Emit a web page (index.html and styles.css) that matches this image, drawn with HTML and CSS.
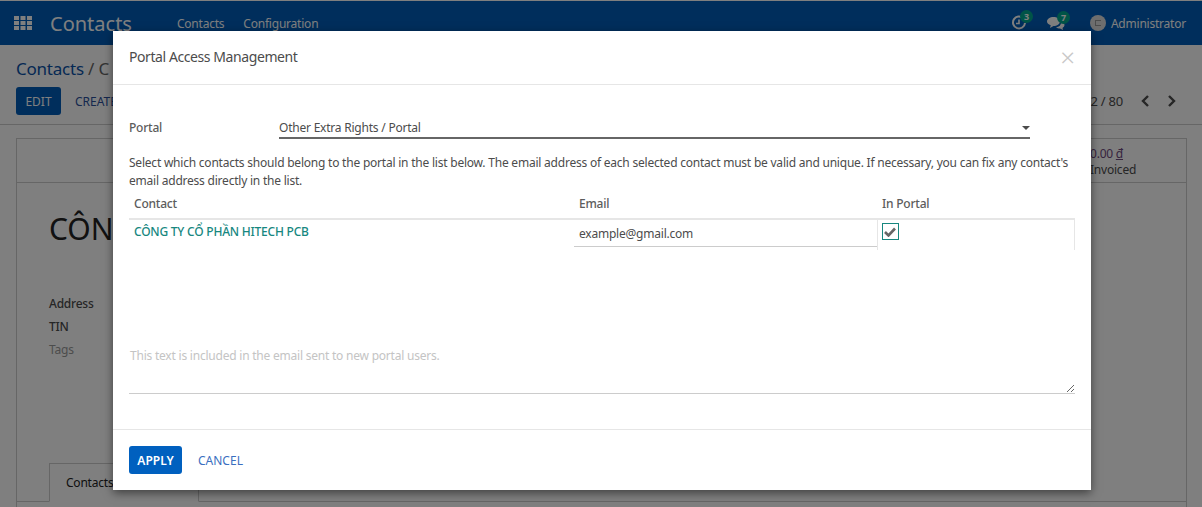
FILE: index.html
```html
<!DOCTYPE html>
<html lang="en">
<head>
    <meta charset="UTF-8">
    <meta name="viewport" content="width=device-width, initial-scale=1.0">
    <title>Portal Access Management</title>
    <link rel="stylesheet" href="styles.css">
</head>
<body>
    <header class="navbar">
        <svg class="apps-icon" width="18" height="14" viewBox="0 0 18 14">
            <path d="M0 0h5v4H0zM6.500 0h5v4h-5zM13 0h5v4h-5zM0 5h5v4H0zM6.500 5h5v4h-5zM13 5h5v4h-5zM0 10h5v4H0zM6.500 10h5v4h-5zM13 10h5v4h-5z" fill="currentColor"/>
        </svg>
        <span class="brand">Contacts</span>
        <nav class="menu">
            <a>Contacts</a>
            <a>Configuration</a>
        </nav>
        <div class="systray">
            <span class="tray-item">
                <svg width="16" height="16" viewBox="0 0 16 16" fill="none" stroke="currentColor">
                    <path d="M12.500 3.500A6 6 0 1 0 14 8" stroke-width="2"/>
                    <path d="M8 4.500V8.500H5" stroke-width="1.600"/>
                </svg>
                <span class="badge badge-clock">3</span>
            </span>
            <span class="tray-item tray-chat">
                <svg width="18" height="15" viewBox="0 0 18 15" fill="currentColor">
                    <path d="M6.500 1C10 1 13 3 13 5.500S10 10 6.500 10L3 12l.7-2.700C1.500 8.500 0 7.200 0 5.500 0 3 3 1 6.500 1z"/>
                    <path d="M14 5.500c2 .6 3.500 2 3.500 3.500 0 1.200-.8 2.200-2 2.900l.5 2.100-3-1.500c-1.500 0-3-.5-4-1.300 3 0 5.500-2.200 5-5.700z"/>
                </svg>
                <span class="badge badge-chat">7</span>
            </span>
            <span class="user">
                <span class="avatar"><span class="avatar-mark"></span></span>
                Administrator
            </span>
        </div>
    </header>

    <section class="control-panel">
        <div class="breadcrumb">Contacts <span class="crumb-sep">/</span> <span class="crumb-current">C</span></div>
        <div class="cp-buttons">
            <div class="cp-left">
                <button class="btn-edit">EDIT</button>
                <button class="btn-link">CREATE</button>
            </div>
            <div class="pager">
                <span>22 / 80</span>
                <svg width="10" height="12" viewBox="0 0 10 12" fill="none" stroke="currentColor" stroke-width="2.400"><path d="M8 1L3 6l5 5"/></svg>
                <svg width="10" height="12" viewBox="0 0 10 12" fill="none" stroke="currentColor" stroke-width="2.400"><path d="M2 1l5 5-5 5"/></svg>
            </div>
        </div>
    </section>

    <main class="sheet">
        <div class="stat-row">
            <div class="stat-box">
                <div class="stat-value">0.00 <u>đ</u></div>
                <div>Invoiced</div>
            </div>
        </div>
        <h1 class="partner-name">CÔNG</h1>
        <div class="partner-field field-strong">Address</div>
        <div class="partner-field field-strong">TIN</div>
        <div class="partner-field field-muted">Tags</div>
        <div class="tabs"><span class="tab">Contacts</span></div>
    </main>

    <div class="backdrop"></div>

    <div class="modal">
        <div class="modal-header">
            <span class="modal-title">Portal Access Management</span>
            <span class="modal-close">×</span>
        </div>
        <div class="modal-body">
            <div class="portal-row">
                <label class="portal-label">Portal</label>
                <div class="portal-select">
                    Other Extra Rights / Portal
                    <span class="caret"></span>
                </div>
            </div>
            <p class="help-text">Select which contacts should belong to the portal in the list below. The email address of each selected contact must be valid and unique. If necessary, you can fix any contact's email address directly in the list.</p>
            <table class="portal-table">
                <thead>
                    <tr>
                        <th class="col-contact">Contact</th>
                        <th class="col-email">Email</th>
                        <th class="col-check">In Portal</th>
                    </tr>
                </thead>
                <tbody>
                    <tr>
                        <td class="contact-name">CÔNG TY CỔ PHẦN HITECH PCB</td>
                        <td class="email-cell"><input type="text" value="example@gmail.com"></td>
                        <td class="check-cell">
                            <span class="checkbox">
                                <svg width="12" height="10" viewBox="0 0 12 10"><path d="M1 5l3.500 3.500L11 1.500" fill="none" stroke="currentColor" stroke-width="2.600"/></svg>
                            </span>
                        </td>
                    </tr>
                </tbody>
            </table>
            <textarea class="welcome-text" placeholder="This text is included in the email sent to new portal users."></textarea>
        </div>
        <div class="modal-footer">
            <button class="btn-apply">APPLY</button>
            <button class="btn-cancel">CANCEL</button>
        </div>
    </div>
</body>
</html>
```

FILE: styles.css
```css
html, body {
    height: 100%;
}

body {
    font-family: "Noto Sans", "Open Sans", Arial, sans-serif;
    font-size: 12px;
    letter-spacing: -0.22px;
    background-color: #fff;
    color: #4c4c4c;
    margin: 0;
    overflow: hidden;
}

.navbar {
    display: flex;
    align-items: center;
    height: 44px;
    margin-top: 1px;
    background-color: #005cb8;
    color: #fff;
    box-sizing: border-box;
}

.apps-icon {
    margin-left: 14px;
}

.brand {
    font-size: 20px;
    letter-spacing: 0;
    margin-left: 18px;
}

.menu {
    display: flex;
    gap: 19px;
    margin-left: 45px;
}

.systray {
    display: flex;
    align-items: center;
    margin-left: auto;
    margin-right: 16px;
}

.tray-item {
    display: flex;
    position: relative;
    margin-right: 20px;
}

.tray-chat {
    margin-right: 25px;
}

.badge {
    position: absolute;
    left: 9px;
    top: -5px;
    width: 13px;
    height: 13px;
    border-radius: 50%;
    background-color: #00a98f;
    font-size: 9px;
    font-weight: bold;
    line-height: 13px;
    text-align: center;
}

.badge-chat {
    left: 10px;
}

.user {
    display: flex;
    align-items: center;
    gap: 5px;
}

.avatar {
    display: flex;
    align-items: center;
    justify-content: center;
    width: 16px;
    height: 16px;
    border-radius: 50%;
    background-color: #ddd;
}

.avatar-mark {
    width: 5px;
    height: 4px;
    border: 1px solid #999;
    border-right-width: 0;
}

.control-panel {
    height: 80px;
    padding: 12px 16px 0;
    box-sizing: border-box;
    background-color: #fff;
    border-bottom: 1px solid #ccc;
}

.breadcrumb {
    font-size: 17px;
    color: #0a52a8;
    line-height: 24px;
}

.crumb-sep, .crumb-current {
    color: #666;
}

.cp-buttons {
    display: flex;
    justify-content: space-between;
    margin-top: 6px;
}

.cp-left {
    display: flex;
    gap: 14px;
}

.btn-edit {
    width: 45px;
    height: 28px;
    border: none;
    border-radius: 3px;
    background-color: #005cb8;
    color: #fff;
    font: inherit;
    padding: 0;
}

.btn-link {
    border: none;
    background: none;
    padding: 0;
    color: #2a4f9c;
    font: inherit;
}

.pager {
    display: flex;
    align-items: center;
    gap: 17px;
    padding-right: 9px;
    font-size: 13px;
}

.sheet {
    margin: 13px 15px 0 16px;
    height: 400px;
    border: 1px solid #ccc;
    overflow: hidden;
}

.stat-row {
    display: flex;
    justify-content: flex-end;
    height: 43px;
    border-bottom: 1px solid #ccc;
}

.stat-box {
    width: 96px;
    padding-top: 7px;
    line-height: 16px;
    border-left: 1px solid #ccc;
}

.stat-value {
    color: #6f4a7e;
}

.partner-name {
    width: 64px;
    overflow: hidden;
    font-size: 30px;
    font-weight: normal;
    letter-spacing: 0;
    color: #222;
    margin: 26px 0 43px 32px;
    line-height: 40px;
    white-space: nowrap;
}

.partner-field {
    margin-left: 32px;
    height: 23px;
    line-height: 23px;
}

.field-strong {
    font-weight: 500;
}

.field-muted {
    color: #999;
}

.tabs {
    margin-top: 102px;
    border-bottom: 1px solid #ccc;
    height: 38px;
    padding-left: 32px;
}

.tab {
    display: inline-block;
    width: 150px;
    height: 39px;
    padding: 10px 16px 0;
    box-sizing: border-box;
    background-color: #fff;
    border: 1px solid #ccc;
    border-bottom-color: #fff;
    color: #222;
}

.backdrop {
    position: absolute;
    inset: 0;
    background-color: rgba(0, 0, 0, 0.5);
}

.modal {
    position: absolute;
    left: 113px;
    top: 31px;
    width: 978px;
    height: 459px;
    background-color: #fff;
    box-shadow: 0 3px 9px rgba(0, 0, 0, 0.5);
    display: flex;
    flex-direction: column;
}

.modal-header {
    display: flex;
    align-items: center;
    justify-content: space-between;
    height: 54px;
    padding: 0 16px 2px;
    box-sizing: border-box;
    border-bottom: 1px solid #e6e6e6;
}

.modal-title {
    font-size: 14px;
    letter-spacing: -0.42px;
    color: #4c4c4c;
}

.modal-close {
    font-size: 26px;
    font-weight: 300;
    line-height: 1;
    color: #c8c8c8;
}

.modal-body {
    flex: 1;
    padding: 33px 16px 0;
    box-sizing: border-box;
}

.portal-row {
    display: flex;
    align-items: flex-start;
    height: 21px;
}

.portal-label {
    width: 150px;
    font-weight: 500;
    color: #5c5c5c;
    line-height: 19px;
}

.portal-select {
    position: relative;
    width: 751px;
    height: 21px;
    line-height: 19px;
    box-sizing: border-box;
    border-bottom: 2px solid #666;
}

.caret {
    position: absolute;
    right: 0;
    top: 8px;
    border-left: 4px solid transparent;
    border-right: 4px solid transparent;
    border-top: 4px solid #4c4c4c;
}

.help-text {
    margin: 15px 0 0;
    line-height: 18px;
}

.portal-table {
    width: 946px;
    border-collapse: collapse;
    table-layout: fixed;
}

.portal-table th {
    text-align: left;
    font-weight: 500;
    color: #5c5c5c;
    height: 29px;
    padding: 0 5px 2px;
    box-sizing: border-box;
    border-bottom: 2px solid #e6e6e6;
}

.col-contact {
    width: 445px;
}

.col-email {
    width: 303px;
}

.portal-table td {
    height: 27px;
    padding: 0;
    vertical-align: top;
}

.portal-table .contact-name {
    color: #17877f;
    font-weight: 500;
    padding: 3px 5px 0;
}

.email-cell input {
    display: block;
    width: 100%;
    height: 27px;
    padding: 0 5px;
    box-sizing: border-box;
    border: none;
    border-bottom: 1px solid #ccc;
    outline: none;
    font: inherit;
    letter-spacing: inherit;
    color: #4c4c4c;
}

.check-cell {
    border-left: 1px solid #e6e6e6;
    border-right: 1px solid #e6e6e6;
}

.checkbox {
    display: flex;
    align-items: center;
    justify-content: center;
    width: 17px;
    height: 17px;
    margin: 3px 0 0 4px;
    box-sizing: border-box;
    border: 1px solid #17877f;
    color: #666;
}

.welcome-text {
    display: block;
    width: 946px;
    height: 47px;
    margin-top: 97px;
    padding: 0 1px;
    box-sizing: border-box;
    border: none;
    border-bottom: 1px solid #ccc;
    outline: none;
    font: inherit;
    letter-spacing: inherit;
    line-height: 18px;
}

.welcome-text::placeholder {
    color: #c4c4c4;
}

.modal-footer {
    display: flex;
    align-items: center;
    gap: 16px;
    height: 61px;
    padding: 0 16px;
    box-sizing: border-box;
    border-top: 1px solid #e6e6e6;
}

.btn-apply {
    width: 53px;
    height: 28px;
    padding: 0;
    border: none;
    border-radius: 3px;
    background-color: #0060bf;
    color: #fff;
    font: inherit;
    font-weight: 600;
}

.btn-cancel {
    border: none;
    background: none;
    padding: 0;
    color: #3b6fc0;
    font: inherit;
}
```
